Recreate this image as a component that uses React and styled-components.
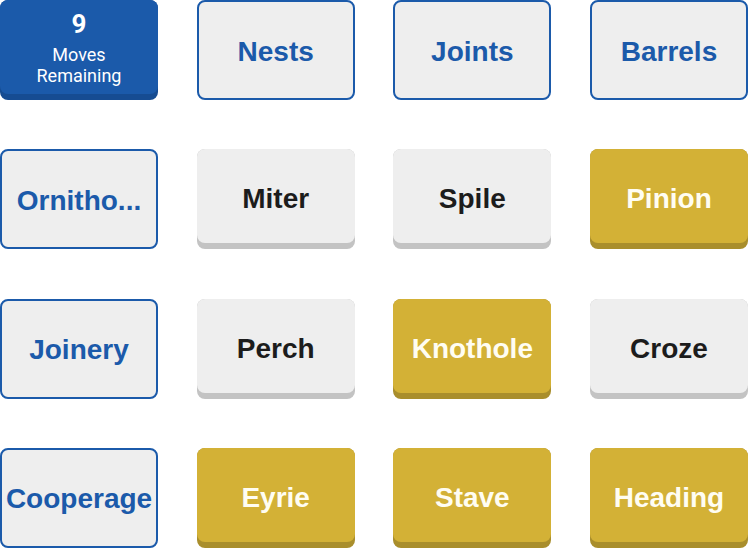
import React from "react";
import styled, { createGlobalStyle, css } from "styled-components";

const GlobalStyle = createGlobalStyle`
  html, body {
    margin: 0;
    padding: 0;
    background: #ffffff;
  }
  #root {
    width: 748px;
    height: 548px;
  }
`;

const palette = {
  blue: "#1b5aaa",
  blueEdge: "#164c92",
  gold: "#d3b136",
  goldEdge: "#a98e2c",
  gray: "#eeeeee",
  grayEdge: "#c3c3c3",
  ink: "#1c1c1c",
};

const Board = styled.div`
  width: 748px;
  height: 548px;
  display: grid;
  grid-template-columns: repeat(4, 158px);
  grid-template-rows: repeat(4, 100px);
  justify-content: space-between;
  align-content: space-between;
`;

/* Raised key: a darker base with the face sitting on top of it */
const Key = styled.div`
  height: 100px;
  border-radius: 8px;
  background: ${({ $edge }) => $edge};
  display: flex;
  flex-direction: column;
`;

const Face = styled.div`
  height: 94px;
  box-sizing: border-box;
  padding-top: 6px;
  border-radius: 8px;
  background: ${({ $bg }) => $bg};
  display: flex;
  flex-direction: column;
  align-items: center;
  justify-content: center;
  color: ${({ $color }) => $color};
`;

/* Flat key with an outline, used for words already placed */
const OutlineKey = styled.div`
  height: 100px;
  box-sizing: border-box;
  border: 2px solid ${palette.blue};
  border-radius: 8px;
  background: ${palette.gray};
  color: ${palette.blue};
  display: flex;
  align-items: center;
  justify-content: center;
  padding-top: 3px;
`;

const Word = styled.span`
  font-family: "Liberation Sans", Arial, sans-serif;
  font-weight: 700;
  font-size: 28px;
  line-height: 32px;
  white-space: nowrap;
  ${({ $light }) =>
    $light &&
    css`
      color: #fffdf2;
    `}
`;

const Count = styled.span`
  font-family: Roboto, "Noto Sans", sans-serif;
  font-weight: 700;
  font-size: 26px;
  line-height: 28px;
  margin-bottom: 6px;
`;

const Caption = styled.span`
  font-family: Roboto, "Noto Sans", sans-serif;
  font-weight: 400;
  font-size: 18px;
  line-height: 21px;
  text-align: center;
`;

const CounterFace = styled(Face)`
  padding-top: 10px;
  justify-content: flex-start;
`;

const tiles = [
  { kind: "counter" },
  { kind: "found", text: "Nests" },
  { kind: "found", text: "Joints" },
  { kind: "found", text: "Barrels" },
  { kind: "found", text: "Ornitho..." },
  { kind: "plain", text: "Miter" },
  { kind: "plain", text: "Spile" },
  { kind: "gold", text: "Pinion" },
  { kind: "found", text: "Joinery" },
  { kind: "plain", text: "Perch" },
  { kind: "gold", text: "Knothole" },
  { kind: "plain", text: "Croze" },
  { kind: "found", text: "Cooperage" },
  { kind: "gold", text: "Eyrie" },
  { kind: "gold", text: "Stave" },
  { kind: "gold", text: "Heading" },
];

function Tile({ tile }) {
  if (tile.kind === "counter") {
    return (
      <Key $edge={palette.blueEdge}>
        <CounterFace $bg={palette.blue} $color="#ffffff">
          <Count>9</Count>
          <Caption>
            Moves
            <br />
            Remaining
          </Caption>
        </CounterFace>
      </Key>
    );
  }
  if (tile.kind === "found") {
    return (
      <OutlineKey>
        <Word>{tile.text}</Word>
      </OutlineKey>
    );
  }
  const gold = tile.kind === "gold";
  return (
    <Key $edge={gold ? palette.goldEdge : palette.grayEdge}>
      <Face $bg={gold ? palette.gold : palette.gray} $color={palette.ink}>
        <Word $light={gold}>{tile.text}</Word>
      </Face>
    </Key>
  );
}

export default function App() {
  return (
    <>
      <GlobalStyle />
      <Board>
        {tiles.map((t, i) => (
          <Tile key={i} tile={t} />
        ))}
      </Board>
    </>
  );
}
